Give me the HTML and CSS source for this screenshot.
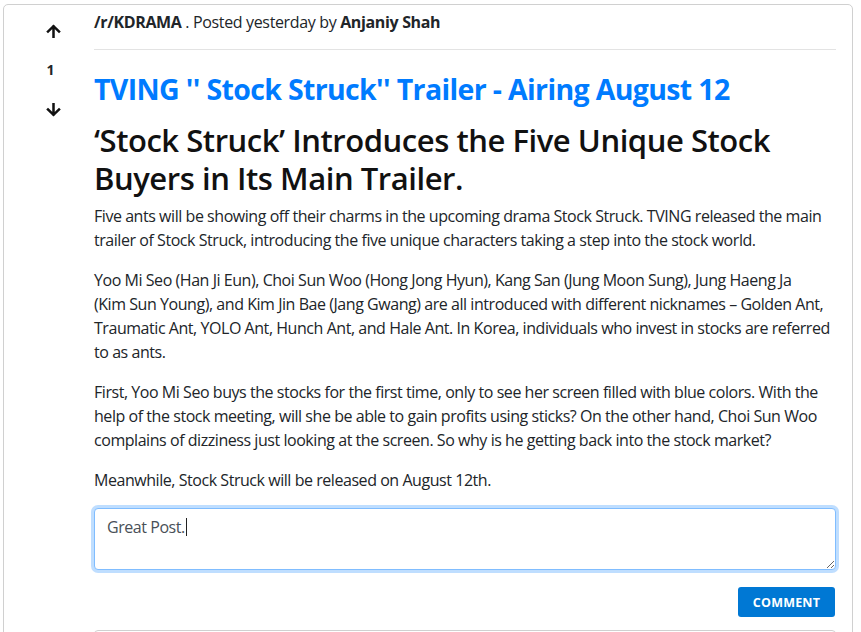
FILE: index.html
```html
<!DOCTYPE html>
<html>
<head>
<meta charset="utf-8">
<link rel="stylesheet" href="styles.css">
</head>
<body>
<div class="card">
  <div class="votes">
    <svg class="arrow up" width="15" height="14" viewBox="0 0 15 14"><path d="M7.5 13V2.5M2 7.6l5.5-5.4L13 7.6" fill="none" stroke="#111" stroke-width="2.5" stroke-linecap="square"/></svg>
    <div class="count">1</div>
    <svg class="arrow down" width="15" height="14" viewBox="0 0 15 14"><path d="M7.5 1v10.5M2 6.4l5.5 5.4L13 6.4" fill="none" stroke="#111" stroke-width="2.5" stroke-linecap="square"/></svg>
  </div>
  <div class="content">
    <div class="meta"><b>/r/KDRAMA</b> . Posted yesterday by <b>Anjaniy Shah</b></div>
    <hr class="rule">
    <h3 class="title">TVING '' Stock Struck'' Trailer - Airing August 12</h3>
    <h2 class="headline">‘Stock Struck’ Introduces the Five Unique Stock Buyers in Its Main Trailer.</h2>
    <p>Five ants will be showing off their charms in the upcoming drama Stock Struck. TVING released the main trailer of Stock Struck, introducing the five unique characters taking a step into the stock world.</p>
    <p>Yoo Mi Seo (Han Ji Eun), Choi Sun Woo (Hong Jong Hyun), Kang San (Jung Moon Sung), Jung Haeng Ja<br>(Kim Sun Young), and Kim Jin Bae (Jang Gwang) are all introduced with different nicknames – Golden Ant, Traumatic Ant, YOLO Ant, Hunch Ant, and Hale Ant. In Korea, individuals who invest in stocks are referred to as ants.</p>
    <p>First, Yoo Mi Seo buys the stocks for the first time, only to see her screen filled with blue colors. With the help of the stock meeting, will she be able to gain profits using sticks? On the other hand, Choi Sun Woo complains of dizziness just looking at the screen. So why is he getting back into the stock market?</p>
    <p>Meanwhile, Stock Struck will be released on August 12th.</p>
    <div class="editor">
      <textarea class="comment-box" rows="2">Great Post.</textarea>
      <span class="caret"></span>
    </div>
    <div class="actions"><button class="btn">COMMENT</button></div>
    <div class="comments"></div>
  </div>
</div>
</body>
</html>
```
FILE: styles.css
```css
html, body { margin: 0; padding: 0; background: #fff; }
body {
  font-family: "Open Sans", "Noto Sans", sans-serif;
  font-size: 16px;
  line-height: 24px;
  color: #212529;
  letter-spacing: -0.45px;
  padding: 4px 8px 0 3px;
  overflow: hidden;
  height: 632px;
  box-sizing: border-box;
}
.card {
  display: flex;
  gap: 10px;
  border: 1px solid #d0d0d0;
  border-radius: 5px;
  padding: 5px 16px 0 19px;
  min-height: 700px;
}
.votes {
  width: 61px;
  flex: none;
  display: flex;
  flex-direction: column;
  align-items: center;
  padding-top: 14px;
}
.arrow { display: block; }
.count {
  font-weight: 700;
  font-size: 14px;
  line-height: 20px;
  margin-top: 22px;
  margin-right: 6px;
  letter-spacing: 0;
}
.arrow.down { margin-top: 23px; }
.content { flex: 1; min-width: 0; }
.meta { font-size: 16px; letter-spacing: -0.35px; }
.meta b { font-weight: 700; }
.rule {
  border: 0;
  border-top: 1px solid #e3e3e3;
  margin: 15px 0 0;
}
.title {
  color: #007bff;
  font-size: 28.5px;
  line-height: 34px;
  font-weight: 700;
  margin: 22px 0 0;
  letter-spacing: -0.65px;
}
.headline {
  font-size: 31px;
  line-height: 38px;
  font-weight: 600;
  margin: 15px 0 7px;
  color: #111;
  letter-spacing: -0.45px;
}
p { margin: 0 0 16px; }
.editor { position: relative; margin-top: 0; }
.comment-box {
  display: block;
  width: 100%;
  box-sizing: border-box;
  height: 62px;
  border: 1px solid #80bdff;
  border-radius: 4px;
  box-shadow: 0 0 0 3px rgba(0,123,255,.25);
  padding: 6px 12px;
  font: inherit;
  letter-spacing: -0.45px;
  color: #495057;
  outline: none;
  resize: vertical;
}
.caret {
  position: absolute;
  left: 92px;
  top: 10px;
  width: 1px;
  height: 18px;
  background: #222;
}
.actions {
  display: flex;
  justify-content: flex-end;
  margin-top: 17px;
  padding-right: 1px;
}
.btn {
  width: 97px;
  height: 30px;
  background: #0078d4;
  color: #fff;
  border: 0;
  border-radius: 3px;
  font-family: "Open Sans", sans-serif;
  font-weight: 700;
  font-size: 12.5px;
  letter-spacing: 0.2px;
}
.comments {
  margin-top: 13px;
  height: 60px;
  border: 1px solid #d0d0d0;
  border-radius: 4px;
}
```
